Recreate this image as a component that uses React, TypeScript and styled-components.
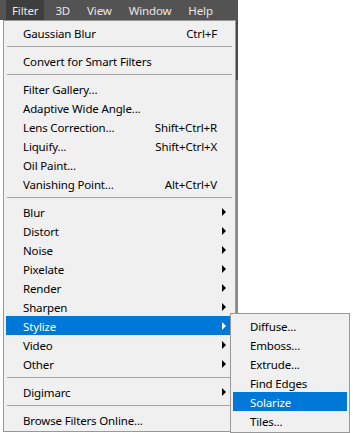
import React from 'react';
import styled, { createGlobalStyle, css } from 'styled-components';

const GlobalStyle = createGlobalStyle`
  html, body {
    margin: 0;
    padding: 0;
    background: #ffffff;
  }
  body {
    font-family: "Noto Sans", "Open Sans", Arial, sans-serif;
    font-size: 11.5px;
    letter-spacing: -0.15px;
    color: #000;
  }
`;

const Screen = styled.div`
  position: relative;
  width: 353px;
  height: 433px;
  overflow: hidden;
`;

const Column = styled.div`
  width: 238px;
  display: flex;
  flex-direction: column;
`;

const MenuBar = styled.div`
  height: 20px;
  background: #535353;
  display: flex;
  align-items: stretch;
  gap: 5px;
  padding-left: 6px;
`;

const BarItem = styled.div<{ $open?: boolean }>`
  display: flex;
  align-items: center;
  padding: 1px 6px 0;
  color: #e8e8e8;
  font-size: 11.5px;
  background: ${({ $open }) => ($open ? '#3e3e3e' : 'transparent')};
`;

const PanelRow = styled.div`
  display: flex;
`;

const Panel = styled.div<{ $width: number }>`
  width: ${({ $width }) => $width}px;
  box-sizing: border-box;
  background: #f0f0f0;
  border: 1px solid #979797;
  padding: 2px;
  display: flex;
  flex-direction: column;
`;

const MainPanel = styled(Panel)`
  margin-left: 3px;
`;

const Strip = styled.div`
  width: 2px;
  background: linear-gradient(#4a4a4a 0, #4a4a4a 60px, #8a8a8a 60px);
`;

const SubMenu = styled(Panel)`
  position: absolute;
  left: 230px;
  top: 313px;
`;

const Row = styled.div<{ $active?: boolean }>`
  height: 19px;
  box-sizing: border-box;
  padding-top: 1px;
  display: flex;
  align-items: center;
  padding-left: 17px;
  padding-right: 16px;
  white-space: nowrap;
  ${({ $active }) =>
    $active
      ? css`
          background: #0078d7;
          color: #fff;
        `
      : css`
          color: #000;
        `}
`;

const Label = styled.span`
  flex: 1;
`;

const Shortcut = styled.span`
  text-align: right;
`;

const Arrow = styled.span<{ $active?: boolean }>`
  width: 0;
  height: 0;
  margin-right: -9px;
  border-top: 4px solid transparent;
  border-bottom: 4px solid transparent;
  border-left: 4px solid ${({ $active }) => ($active ? '#fff' : '#000')};
`;

const Separator = styled.div`
  height: 1px;
  margin: 4px 1px;
  background: #a6a6a6;
`;

type Item =
  | { sep: true }
  | { label: string; shortcut?: string; sub?: boolean; active?: boolean };

const mainItems: Item[] = [
  { label: 'Gaussian Blur', shortcut: 'Ctrl+F' },
  { sep: true },
  { label: 'Convert for Smart Filters' },
  { sep: true },
  { label: 'Filter Gallery...' },
  { label: 'Adaptive Wide Angle...' },
  { label: 'Lens Correction...', shortcut: 'Shift+Ctrl+R' },
  { label: 'Liquify...', shortcut: 'Shift+Ctrl+X' },
  { label: 'Oil Paint...' },
  { label: 'Vanishing Point...', shortcut: 'Alt+Ctrl+V' },
  { sep: true },
  { label: 'Blur', sub: true },
  { label: 'Distort', sub: true },
  { label: 'Noise', sub: true },
  { label: 'Pixelate', sub: true },
  { label: 'Render', sub: true },
  { label: 'Sharpen', sub: true },
  { label: 'Stylize', sub: true, active: true },
  { label: 'Video', sub: true },
  { label: 'Other', sub: true },
  { sep: true },
  { label: 'Digimarc', sub: true },
  { sep: true },
  { label: 'Browse Filters Online...' },
];

const stylizeItems: Item[] = [
  { label: 'Diffuse...' },
  { label: 'Emboss...' },
  { label: 'Extrude...' },
  { label: 'Find Edges' },
  { label: 'Solarize', active: true },
  { label: 'Tiles...' },
];

const MenuItems: React.FC<{ items: Item[] }> = ({ items }) => (
  <>
    {items.map((item, i) =>
      'sep' in item ? (
        <Separator key={i} />
      ) : (
        <Row key={i} $active={item.active}>
          <Label>{item.label}</Label>
          {item.shortcut && <Shortcut>{item.shortcut}</Shortcut>}
          {item.sub && <Arrow $active={item.active} />}
        </Row>
      )
    )}
  </>
);

const App: React.FC = () => (
  <>
    <GlobalStyle />
    <Screen>
      <Column>
        <MenuBar>
          <BarItem $open>Filter</BarItem>
          <BarItem>3D</BarItem>
          <BarItem>View</BarItem>
          <BarItem>Window</BarItem>
          <BarItem>Help</BarItem>
        </MenuBar>
        <PanelRow>
          <MainPanel $width={233}>
            <MenuItems items={mainItems} />
          </MainPanel>
          <Strip />
        </PanelRow>
      </Column>
      <SubMenu $width={120}>
        <MenuItems items={stylizeItems} />
      </SubMenu>
    </Screen>
  </>
);

export default App;
